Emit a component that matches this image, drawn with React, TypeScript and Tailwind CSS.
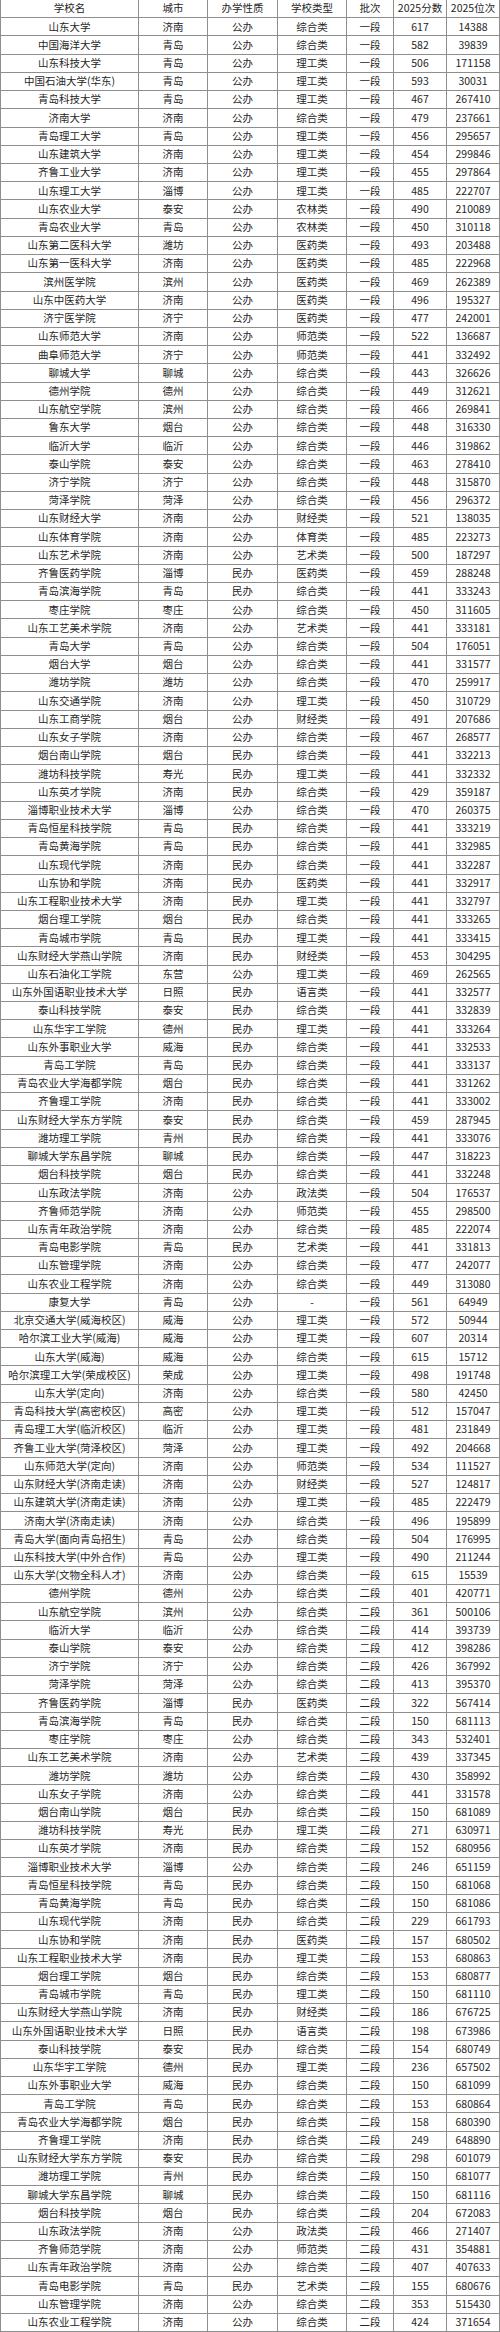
const header = ["学校名", "城市", "办学性质", "学校类型", "批次", "2025分数", "2025位次"]

const rows = [
  "山东大学 济南 公办 综合类 一段 617 14388",
  "中国海洋大学 青岛 公办 综合类 一段 582 39839",
  "山东科技大学 青岛 公办 理工类 一段 506 171158",
  "中国石油大学(华东) 青岛 公办 理工类 一段 593 30031",
  "青岛科技大学 青岛 公办 理工类 一段 467 267410",
  "济南大学 济南 公办 综合类 一段 479 237661",
  "青岛理工大学 青岛 公办 理工类 一段 456 295657",
  "山东建筑大学 济南 公办 理工类 一段 454 299846",
  "齐鲁工业大学 济南 公办 理工类 一段 455 297864",
  "山东理工大学 淄博 公办 理工类 一段 485 222707",
  "山东农业大学 泰安 公办 农林类 一段 490 210089",
  "青岛农业大学 青岛 公办 农林类 一段 450 310118",
  "山东第二医科大学 潍坊 公办 医药类 一段 493 203488",
  "山东第一医科大学 济南 公办 医药类 一段 485 222968",
  "滨州医学院 滨州 公办 医药类 一段 469 262389",
  "山东中医药大学 济南 公办 医药类 一段 496 195327",
  "济宁医学院 济宁 公办 医药类 一段 477 242001",
  "山东师范大学 济南 公办 师范类 一段 522 136687",
  "曲阜师范大学 济宁 公办 师范类 一段 441 332492",
  "聊城大学 聊城 公办 综合类 一段 443 326626",
  "德州学院 德州 公办 综合类 一段 449 312621",
  "山东航空学院 滨州 公办 综合类 一段 466 269841",
  "鲁东大学 烟台 公办 综合类 一段 448 316330",
  "临沂大学 临沂 公办 综合类 一段 446 319862",
  "泰山学院 泰安 公办 综合类 一段 463 278410",
  "济宁学院 济宁 公办 综合类 一段 448 315870",
  "菏泽学院 菏泽 公办 综合类 一段 456 296372",
  "山东财经大学 济南 公办 财经类 一段 521 138035",
  "山东体育学院 济南 公办 体育类 一段 485 223273",
  "山东艺术学院 济南 公办 艺术类 一段 500 187297",
  "齐鲁医药学院 淄博 民办 医药类 一段 459 288248",
  "青岛滨海学院 青岛 民办 综合类 一段 441 333243",
  "枣庄学院 枣庄 公办 综合类 一段 450 311605",
  "山东工艺美术学院 济南 公办 艺术类 一段 441 333181",
  "青岛大学 青岛 公办 综合类 一段 504 176051",
  "烟台大学 烟台 公办 综合类 一段 441 331577",
  "潍坊学院 潍坊 公办 综合类 一段 470 259917",
  "山东交通学院 济南 公办 理工类 一段 450 310729",
  "山东工商学院 烟台 公办 财经类 一段 491 207686",
  "山东女子学院 济南 公办 综合类 一段 467 268577",
  "烟台南山学院 烟台 民办 综合类 一段 441 332213",
  "潍坊科技学院 寿光 民办 理工类 一段 441 332332",
  "山东英才学院 济南 民办 综合类 一段 429 359187",
  "淄博职业技术大学 淄博 公办 综合类 一段 470 260375",
  "青岛恒星科技学院 青岛 民办 综合类 一段 441 333219",
  "青岛黄海学院 青岛 民办 综合类 一段 441 332985",
  "山东现代学院 济南 民办 综合类 一段 441 332287",
  "山东协和学院 济南 民办 医药类 一段 441 332917",
  "山东工程职业技术大学 济南 民办 理工类 一段 441 332797",
  "烟台理工学院 烟台 民办 综合类 一段 441 333265",
  "青岛城市学院 青岛 民办 理工类 一段 441 333415",
  "山东财经大学燕山学院 济南 民办 财经类 一段 453 304295",
  "山东石油化工学院 东营 公办 理工类 一段 469 262565",
  "山东外国语职业技术大学 日照 民办 语言类 一段 441 332577",
  "泰山科技学院 泰安 民办 综合类 一段 441 332839",
  "山东华宇工学院 德州 民办 理工类 一段 441 333264",
  "山东外事职业大学 威海 民办 综合类 一段 441 332533",
  "青岛工学院 青岛 民办 综合类 一段 441 333137",
  "青岛农业大学海都学院 烟台 民办 综合类 一段 441 331262",
  "齐鲁理工学院 济南 民办 综合类 一段 441 333002",
  "山东财经大学东方学院 泰安 民办 综合类 一段 459 287945",
  "潍坊理工学院 青州 民办 综合类 一段 441 333076",
  "聊城大学东昌学院 聊城 民办 综合类 一段 447 318223",
  "烟台科技学院 烟台 民办 综合类 一段 441 332248",
  "山东政法学院 济南 公办 政法类 一段 504 176537",
  "齐鲁师范学院 济南 公办 师范类 一段 455 298500",
  "山东青年政治学院 济南 公办 综合类 一段 485 222074",
  "青岛电影学院 青岛 民办 艺术类 一段 441 331813",
  "山东管理学院 济南 公办 综合类 一段 477 242077",
  "山东农业工程学院 济南 公办 综合类 一段 449 313080",
  "康复大学 青岛 公办 - 一段 561 64949",
  "北京交通大学(威海校区) 威海 公办 理工类 一段 572 50944",
  "哈尔滨工业大学(威海) 威海 公办 理工类 一段 607 20314",
  "山东大学(威海) 威海 公办 综合类 一段 615 15712",
  "哈尔滨理工大学(荣成校区) 荣成 公办 理工类 一段 498 191748",
  "山东大学(定向) 济南 公办 综合类 一段 580 42450",
  "青岛科技大学(高密校区) 高密 公办 理工类 一段 512 157047",
  "青岛理工大学(临沂校区) 临沂 公办 理工类 一段 481 231849",
  "齐鲁工业大学(菏泽校区) 菏泽 公办 理工类 一段 492 204668",
  "山东师范大学(定向) 济南 公办 师范类 一段 534 111527",
  "山东财经大学(济南走读) 济南 公办 财经类 一段 527 124817",
  "山东建筑大学(济南走读) 济南 公办 理工类 一段 485 222479",
  "济南大学(济南走读) 济南 公办 综合类 一段 496 195899",
  "青岛大学(面向青岛招生) 青岛 公办 综合类 一段 504 176995",
  "山东科技大学(中外合作) 青岛 公办 理工类 一段 490 211244",
  "山东大学(文物全科人才) 济南 公办 综合类 一段 615 15539",
  "德州学院 德州 公办 综合类 二段 401 420771",
  "山东航空学院 滨州 公办 综合类 二段 361 500106",
  "临沂大学 临沂 公办 综合类 二段 414 393739",
  "泰山学院 泰安 公办 综合类 二段 412 398286",
  "济宁学院 济宁 公办 综合类 二段 426 367992",
  "菏泽学院 菏泽 公办 综合类 二段 413 395370",
  "齐鲁医药学院 淄博 民办 医药类 二段 322 567414",
  "青岛滨海学院 青岛 民办 综合类 二段 150 681113",
  "枣庄学院 枣庄 公办 综合类 二段 343 532401",
  "山东工艺美术学院 济南 公办 艺术类 二段 439 337345",
  "潍坊学院 潍坊 公办 综合类 二段 430 358992",
  "山东女子学院 济南 公办 综合类 二段 441 331578",
  "烟台南山学院 烟台 民办 综合类 二段 150 681089",
  "潍坊科技学院 寿光 民办 理工类 二段 271 630971",
  "山东英才学院 济南 民办 综合类 二段 152 680956",
  "淄博职业技术大学 淄博 公办 综合类 二段 246 651159",
  "青岛恒星科技学院 青岛 民办 综合类 二段 150 681068",
  "青岛黄海学院 青岛 民办 综合类 二段 150 681086",
  "山东现代学院 济南 民办 综合类 二段 229 661793",
  "山东协和学院 济南 民办 医药类 二段 157 680502",
  "山东工程职业技术大学 济南 民办 理工类 二段 153 680863",
  "烟台理工学院 烟台 民办 综合类 二段 153 680877",
  "青岛城市学院 青岛 民办 理工类 二段 150 681110",
  "山东财经大学燕山学院 济南 民办 财经类 二段 186 676725",
  "山东外国语职业技术大学 日照 民办 语言类 二段 198 673986",
  "泰山科技学院 泰安 民办 综合类 二段 154 680749",
  "山东华宇工学院 德州 民办 理工类 二段 236 657502",
  "山东外事职业大学 威海 民办 综合类 二段 150 681099",
  "青岛工学院 青岛 民办 综合类 二段 153 680864",
  "青岛农业大学海都学院 烟台 民办 综合类 二段 158 680390",
  "齐鲁理工学院 济南 民办 综合类 二段 249 648890",
  "山东财经大学东方学院 泰安 民办 综合类 二段 298 601079",
  "潍坊理工学院 青州 民办 综合类 二段 150 681077",
  "聊城大学东昌学院 聊城 民办 综合类 二段 150 681116",
  "烟台科技学院 烟台 民办 综合类 二段 204 672083",
  "山东政法学院 济南 公办 政法类 二段 466 271407",
  "齐鲁师范学院 济南 公办 师范类 二段 431 354881",
  "山东青年政治学院 济南 公办 综合类 二段 407 407633",
  "青岛电影学院 青岛 民办 艺术类 二段 155 680676",
  "山东管理学院 济南 公办 综合类 二段 353 515430",
  "山东农业工程学院 济南 公办 综合类 二段 424 371654",
]

function Row({ cells }: { cells: string[] }) {
  return (
    <div className="grid grid-cols-[138px_69px_70px_69px_47px_53px_53px] h-[18.22px] border-b border-[#8e8e8e]">
      {cells.map((c, i) => (
        <div
          key={i}
          className="flex items-center justify-center border-r border-[#8e8e8e] whitespace-nowrap overflow-hidden"
        >
          {c}
        </div>
      ))}
    </div>
  )
}

export default function App() {
  return (
    <div
      className="w-[500px] bg-white text-[#262626] text-[10.5px] leading-none border-l border-[#8e8e8e]"
      style={{ fontFamily: '"Noto Sans CJK SC", "Noto Sans", sans-serif' }}
    >
      <Row cells={header} />
      {rows.map((r, i) => (
        <Row key={i} cells={r.split(" ")} />
      ))}
    </div>
  )
}
